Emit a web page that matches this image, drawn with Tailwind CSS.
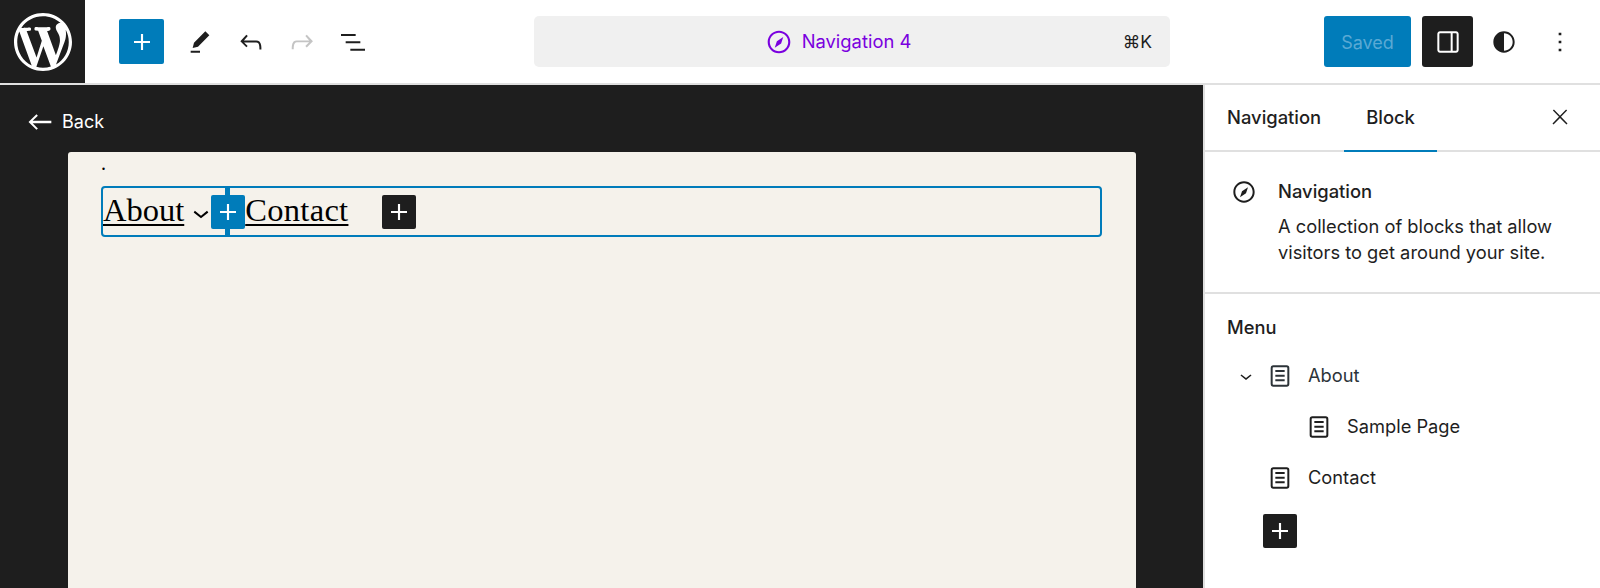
<!DOCTYPE html>
<html lang="en"><head><meta charset="utf-8"><title>Navigation</title>
<script src="https://cdn.jsdelivr.net/npm/@tailwindcss/browser@4"></script></head>
<body class="m-0 bg-white font-['Inter',sans-serif] text-[#1e1e1e]">
<div class="w-[1600px] h-[588px] flex flex-col overflow-hidden">
  <header class="h-[85px] shrink-0 flex items-center bg-white border-b-2 border-[#e0e0e0]">
    <div class="w-[85px] h-[83px] bg-[#1e1e1e] flex items-center justify-center shrink-0">
      <svg class="w-[58px] h-[58px] fill-white" viewBox="0 0 20 20"><path d="M20 10c0-5.51-4.49-10-10-10C4.48 0 0 4.49 0 10c0 5.52 4.48 10 10 10 5.51 0 10-4.48 10-10zM7.78 15.37L4.37 6.22c.55-.02 1.17-.08 1.17-.08.5-.06.44-1.13-.06-1.11 0 0-1.45.11-2.37.11-.18 0-.37 0-.58-.01C4.12 2.69 6.87 1.11 10 1.11c2.33 0 4.45.87 6.05 2.34-.68-.11-1.65.39-1.65 1.58 0 .74.45 1.36.9 2.1.35.61.55 1.36.55 2.46 0 1.49-1.4 5-1.4 5l-3.03-8.37c.54-.02.82-.17.82-.17.5-.05.44-1.25-.06-1.22 0 0-1.44.12-2.38.12-.87 0-2.33-.12-2.33-.12-.5-.03-.56 1.2-.06 1.22l.92.08 1.26 3.41zM17.41 10c.24-.64.74-1.87.43-4.25.7 1.29 1.05 2.71 1.05 4.25 0 3.29-1.73 6.24-4.4 7.78.97-2.59 1.94-5.2 2.92-7.78zM6.1 18.09C3.12 16.65 1.11 13.53 1.11 10c0-1.3.23-2.48.72-3.59C3.25 10.3 4.67 14.2 6.1 18.09zm4.03-6.63l2.58 6.98c-.86.29-1.76.45-2.71.45-.79 0-1.57-.11-2.29-.33.81-2.38 1.62-4.74 2.42-7.1z"/></svg>
    </div>
    <div class="ml-[34px] w-[45px] h-[45px] rounded-[2px] bg-[#007cba] flex items-center justify-center">
      <svg class="w-[32px] h-[32px] fill-white" viewBox="0 0 24 24"><path d="M18 11.200h-5.200V6h-1.600v5.200H6v1.600h5.200V18h1.600v-5.200H18z"/></svg>
    </div>
    <div class="ml-[20px] flex items-center gap-[19px]">
      <svg class="w-[32px] h-[32px] fill-[#1e1e1e]" viewBox="0 0 24 24"><path d="m19 7-3-3-8.500 8.500-1 4 4-1L19 7Zm-7 11.500H5V20h7v-1.500Z"/></svg>
      <svg class="w-[32px] h-[32px] fill-[#1e1e1e]" viewBox="0 0 24 24"><path d="M18.300 11.700c-.6-.6-1.400-.9-2.300-.9H6.700l2.900-3.300-1.100-1-4.500 5L8.500 16l1-1-2.700-2.700H16c.5 0 .9.2 1.300.5 1 1 1 3.400 1 4.500v.3h1.500v-.2c0-1.500 0-4.300-1.500-5.700z"/></svg>
      <svg class="w-[32px] h-[32px] fill-[#c4c4c4]" viewBox="0 0 24 24"><path d="M15.600 6.500l-1.100 1 2.900 3.300H8c-.9 0-1.700.3-2.300.9-1.400 1.500-1.400 4.200-1.400 5.600v.2h1.500v-.3c0-1.100 0-3.500 1-4.500.3-.3.7-.5 1.300-.5h9.200L14.500 15l1.100 1.100 4.600-4.600-4.600-5z"/></svg>
      <svg class="w-[32px] h-[32px] fill-[#1e1e1e]" viewBox="0 0 24 24"><path d="M3 6h11v1.500H3V6Zm3.500 5.500h11V13h-11v-1.500ZM21 17H10v1.500h11V17Z"/></svg>
    </div>
    <div class="ml-[165px] w-[636px] h-[51px] rounded-[5px] bg-[#f0f0f0] flex items-center relative">
      <div class="flex-1 flex items-center justify-center gap-[6px] pr-[31px] text-[#7a00df] text-[18.4px]">
        <svg class="w-[34px] h-[34px] fill-[#7a00df]" viewBox="0 0 24 24"><path d="M12 4c-4.400 0-8 3.600-8 8s3.600 8 8 8 8-3.600 8-8-3.600-8-8-8zm0 14.500c-3.600 0-6.500-2.900-6.500-6.500S8.400 5.500 12 5.500s6.500 2.900 6.500 6.500-2.900 6.500-6.500 6.500zM9 16l4.500-3L15 8.400l-4.500 3L9 16z"/></svg>
        <span class="pt-[1px]">Navigation 4</span>
      </div>
      <span class="absolute right-[18px] pt-[1px] text-[17.5px] text-[#1e1e1e]">⌘K</span>
    </div>
    <div class="ml-[154px] w-[87px] h-[51px] rounded-[3px] bg-[#007cba] pt-[1px] text-[#5aa9d4] text-[18px] flex items-center justify-center">Saved</div>
    <div class="ml-[11px] w-[51px] h-[51px] rounded-[3px] bg-[#1e1e1e] flex items-center justify-center">
      <svg class="w-[32px] h-[32px] fill-white" viewBox="0 0 24 24"><path d="M18 4H6c-1.100 0-2 .9-2 2v12c0 1.100.9 2 2 2h12c1.100 0 2-.9 2-2V6c0-1.100-.9-2-2-2zm-4 14.500H6c-.3 0-.5-.2-.5-.5V6c0-.3.2-.5.5-.5h8v13zm4.500-.5c0 .3-.2.5-.5.5h-2.500v-13H18c.3 0 .5.2.5.5v12z"/></svg>
    </div>
    <svg class="ml-[15px] w-[32px] h-[32px] fill-[#1e1e1e]" viewBox="0 0 24 24"><path fill-rule="evenodd" d="M12 4c-4.400 0-8 3.600-8 8s3.600 8 8 8 8-3.600 8-8-3.600-8-8-8zm0 14.500v-13c3.600 0 6.500 2.900 6.500 6.500s-2.900 6.500-6.500 6.500z"/></svg>
    <svg class="ml-[24px] w-[32px] h-[32px] fill-[#1e1e1e]" viewBox="0 0 24 24"><path d="M13 19h-2v-2h2v2zm0-6h-2v-2h2v2zm0-6h-2V5h2v2z"/></svg>
  </header>
  <div class="flex-1 min-h-0 flex">
    <main class="flex-1 min-w-0 bg-[#1e1e1e] flex flex-col">
      <div class="h-[67px] shrink-0 flex items-center pl-[23px] pt-[6px] text-white text-[18px] gap-[5px]">
        <svg class="w-[34px] h-[34px] fill-white" viewBox="0 0 24 24"><path d="M20 11.200H6.800l3.700-3.700-1-1L3.900 12l5.600 5.500 1-1-3.700-3.700H20z"/></svg>
        <span>Back</span>
      </div>
      <div class="ml-[68px] w-[1068px] flex-1 bg-[#f5f2eb] rounded-t-[3px] pl-[33px] pr-[34px] font-['Liberation_Serif',serif] text-black">
        <div class="h-[34px] text-[20px] leading-[23px]">.</div>
        <div class="h-[51px] border-2 border-[#007cba] rounded-[4px] flex items-center relative text-[32.5px] leading-[40px]">
          <span class="underline decoration-[2px] underline-offset-[3px] -mt-[4px]">About</span>
          <svg class="ml-[1px] w-[32px] h-[32px] fill-black mt-[2px]" viewBox="0 0 24 24"><path d="M17.500 11.600L12 16l-5.500-4.400.9-1.200L12 14l4.500-3.600 1 1.200z"/></svg>
          <div class="relative w-[34px] h-[34px] rounded-[2px] bg-[#007cba] flex items-center justify-center -ml-[6px]">
            <div class="absolute left-[14px] -top-[8px] w-[5px] h-[49px] bg-[#007cba]"></div>
            <svg class="relative w-[32px] h-[32px] fill-white" viewBox="0 0 24 24"><path d="M18 11.200h-5.200V6h-1.600v5.200H6v1.600h5.200V18h1.600v-5.200H18z"/></svg>
          </div>
          <span class="underline decoration-[2px] underline-offset-[3px] -mt-[4px] tracking-[0.3px]">Contact</span>
          <div class="ml-[34px] w-[34px] h-[34px] rounded-[2px] bg-[#1e1e1e] flex items-center justify-center">
            <svg class="w-[32px] h-[32px] fill-white" viewBox="0 0 24 24"><path d="M18 11.200h-5.200V6h-1.600v5.200H6v1.600h5.200V18h1.600v-5.200H18z"/></svg>
          </div>
        </div>
      </div>
    </main>
    <aside class="w-[397px] shrink-0 bg-white border-l-2 border-[#e0e0e0] flex flex-col text-[18.3px]">
      <div class="h-[67px] shrink-0 flex items-stretch border-b-2 border-[#e0e0e0] relative text-[18.4px] font-medium">
        <div class="pl-[22px] pr-[23px] flex items-center">Navigation</div>
        <div class="px-[22px] flex items-center relative">Block<div class="absolute left-0 right-0 -bottom-[2px] h-[2px] bg-[#007cba]"></div></div>
        <svg class="absolute right-[28px] top-[20px] w-[24px] h-[24px] fill-[#1e1e1e]" viewBox="0 0 24 24"><path d="M13 11.800l6.100-6.300-1-1-6.100 6.200-6.100-6.200-1 1 6.100 6.300-6.500 6.700 1 1 6.500-6.600 6.500 6.600 1-1z"/></svg>
      </div>
      <div class="h-[142px] shrink-0 border-b-2 border-[#e0e0e0] flex pl-[23px] pt-[24px]">
        <svg class="w-[32px] h-[32px] fill-[#1e1e1e] shrink-0" viewBox="0 0 24 24"><path d="M12 4c-4.400 0-8 3.600-8 8s3.600 8 8 8 8-3.600 8-8-3.600-8-8-8zm0 14.500c-3.600 0-6.500-2.900-6.500-6.500S8.400 5.500 12 5.500s6.500 2.900 6.500 6.500-2.900 6.500-6.500 6.500zM9 16l4.500-3L15 8.400l-4.500 3L9 16z"/></svg>
        <div class="ml-[18px]">
          <div class="h-[32px] flex items-center font-medium text-[18.4px]">Navigation</div>
          <p class="mt-[5px] leading-[26px] whitespace-nowrap">A collection of blocks that allow<br>visitors to get around your site.</p>
        </div>
      </div>
      <div class="pl-[22px] pt-[21px]">
        <div class="h-[26px] flex items-center font-medium">Menu</div>
        <div class="mt-[19px] flex flex-col gap-[19px]">
          <div class="h-[32px] flex items-center text-[#2c3338]">
            <svg class="ml-[7px] w-[24px] h-[24px] fill-[#1e1e1e]" viewBox="0 0 24 24"><path d="M17.500 11.600L12 16l-5.500-4.400.9-1.200L12 14l4.500-3.600 1 1.200z"/></svg>
            <svg class="ml-[6px] w-[32px] h-[32px] fill-[#2c3338]" viewBox="0 0 24 24"><path d="M15.500 7.500h-7V9h7V7.500Zm-7 3.500h7v1.500h-7V11Zm7 3.500h-7V16h7v-1.500Z"/><path d="M17 4H7a2 2 0 0 0-2 2v12a2 2 0 0 0 2 2h10a2 2 0 0 0 2-2V6a2 2 0 0 0-2-2ZM7 5.500h10a.5.5 0 0 1 .5.5v12a.5.5 0 0 1-.5.5H7a.5.5 0 0 1-.5-.5V6a.5.5 0 0 1 .5-.5Z"/></svg>
            <span class="ml-[12px]">About</span>
          </div>
          <div class="h-[32px] flex items-center pl-[76px]">
            <svg class="w-[32px] h-[32px] fill-[#1e1e1e]" viewBox="0 0 24 24"><path d="M15.500 7.500h-7V9h7V7.500Zm-7 3.500h7v1.500h-7V11Zm7 3.500h-7V16h7v-1.500Z"/><path d="M17 4H7a2 2 0 0 0-2 2v12a2 2 0 0 0 2 2h10a2 2 0 0 0 2-2V6a2 2 0 0 0-2-2ZM7 5.500h10a.5.5 0 0 1 .5.5v12a.5.5 0 0 1-.5.5H7a.5.5 0 0 1-.5-.5V6a.5.5 0 0 1 .5-.5Z"/></svg>
            <span class="ml-[12px]">Sample Page</span>
          </div>
          <div class="h-[32px] flex items-center pl-[37px]">
            <svg class="w-[32px] h-[32px] fill-[#1e1e1e]" viewBox="0 0 24 24"><path d="M15.500 7.500h-7V9h7V7.500Zm-7 3.500h7v1.500h-7V11Zm7 3.500h-7V16h7v-1.500Z"/><path d="M17 4H7a2 2 0 0 0-2 2v12a2 2 0 0 0 2 2h10a2 2 0 0 0 2-2V6a2 2 0 0 0-2-2ZM7 5.500h10a.5.5 0 0 1 .5.5v12a.5.5 0 0 1-.5.5H7a.5.5 0 0 1-.5-.5V6a.5.5 0 0 1 .5-.5Z"/></svg>
            <span class="ml-[12px]">Contact</span>
          </div>
        </div>
        <div class="mt-[20px] ml-[36px] w-[34px] h-[34px] rounded-[2px] bg-[#1e1e1e] flex items-center justify-center">
          <svg class="w-[32px] h-[32px] fill-white" viewBox="0 0 24 24"><path d="M18 11.200h-5.200V6h-1.600v5.200H6v1.600h5.200V18h1.600v-5.200H18z"/></svg>
        </div>
      </div>
    </aside>
  </div>
</div>
</body></html>
